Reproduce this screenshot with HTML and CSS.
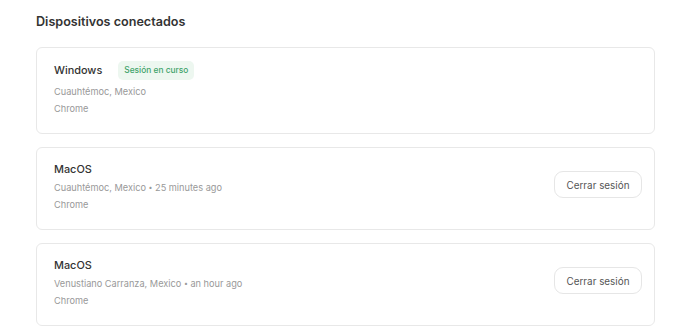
FILE: index.html
```html
<!DOCTYPE html>
<html lang="es">
<head>
    <meta charset="UTF-8">
    <meta name="viewport" content="width=device-width, initial-scale=1.0">
    <title>Dispositivos conectados</title>
    <link rel="stylesheet" href="styles.css">
</head>
<body>
    <div class="devices">
        <h2 class="devices-title">Dispositivos conectados</h2>

        <div class="device-card">
            <div class="device-info">
                <div class="device-head">
                    <span class="device-name">Windows</span>
                    <span class="badge">Sesión en curso</span>
                </div>
                <p class="device-meta">Cuauhtémoc, Mexico</p>
                <p class="device-meta">Chrome</p>
            </div>
        </div>

        <div class="device-card">
            <div class="device-info">
                <div class="device-head">
                    <span class="device-name">MacOS</span>
                </div>
                <p class="device-meta">Cuauhtémoc, Mexico <span class="dot">•</span> 25 minutes ago</p>
                <p class="device-meta">Chrome</p>
            </div>
            <button class="logout-button">Cerrar sesión</button>
        </div>

        <div class="device-card">
            <div class="device-info">
                <div class="device-head">
                    <span class="device-name">MacOS</span>
                </div>
                <p class="device-meta">Venustiano Carranza, Mexico <span class="dot">•</span> an hour ago</p>
                <p class="device-meta">Chrome</p>
            </div>
            <button class="logout-button">Cerrar sesión</button>
        </div>
    </div>
</body>
</html>
```

FILE: styles.css
```css
body {
    font-family: 'Inter', 'Noto Sans', sans-serif;
    background-color: #ffffff;
    color: #333;
    margin: 0;
    padding: 0;
}

.devices {
    padding: 11px 33px 0 36px;
    display: flex;
    flex-direction: column;
    gap: 13px;
}

.devices-title {
    font-size: 12.6px;
    font-weight: 600;
    color: #333;
    margin: 0 0 1px 0;
    line-height: 22px;
}

.device-card {
    display: flex;
    align-items: center;
    justify-content: space-between;
    border: 1px solid #e8e8e8;
    border-radius: 6px;
    padding: 12px 12px 16px 17px;
}

.device-info {
    display: flex;
    flex-direction: column;
}

.device-head {
    display: flex;
    align-items: center;
    gap: 16px;
    min-height: 19px;
}

.device-head:has(.badge) {
    min-height: 21px;
    margin-bottom: 2px;
}

.device-name {
    font-size: 10.9px;
    font-weight: 500;
    color: #333;
    line-height: 19px;
}

.badge {
    font-size: 8.4px;
    font-weight: 500;
    color: #3fa36a;
    background-color: #edf7f0;
    border-radius: 5px;
    padding: 0 6px;
    line-height: 19px;
}

.device-meta {
    margin: 0;
    font-size: 9.2px;
    color: #999;
    line-height: 17px;
}

.dot {
    font-size: 7px;
    vertical-align: 1px;
}

.logout-button {
    font-family: inherit;
    font-size: 9.9px;
    color: #555;
    background-color: #fff;
    border: 1px solid #e6e6e6;
    border-radius: 9px;
    height: 27px;
    width: 88px;
    margin-bottom: 4px;
    cursor: pointer;
}
```
